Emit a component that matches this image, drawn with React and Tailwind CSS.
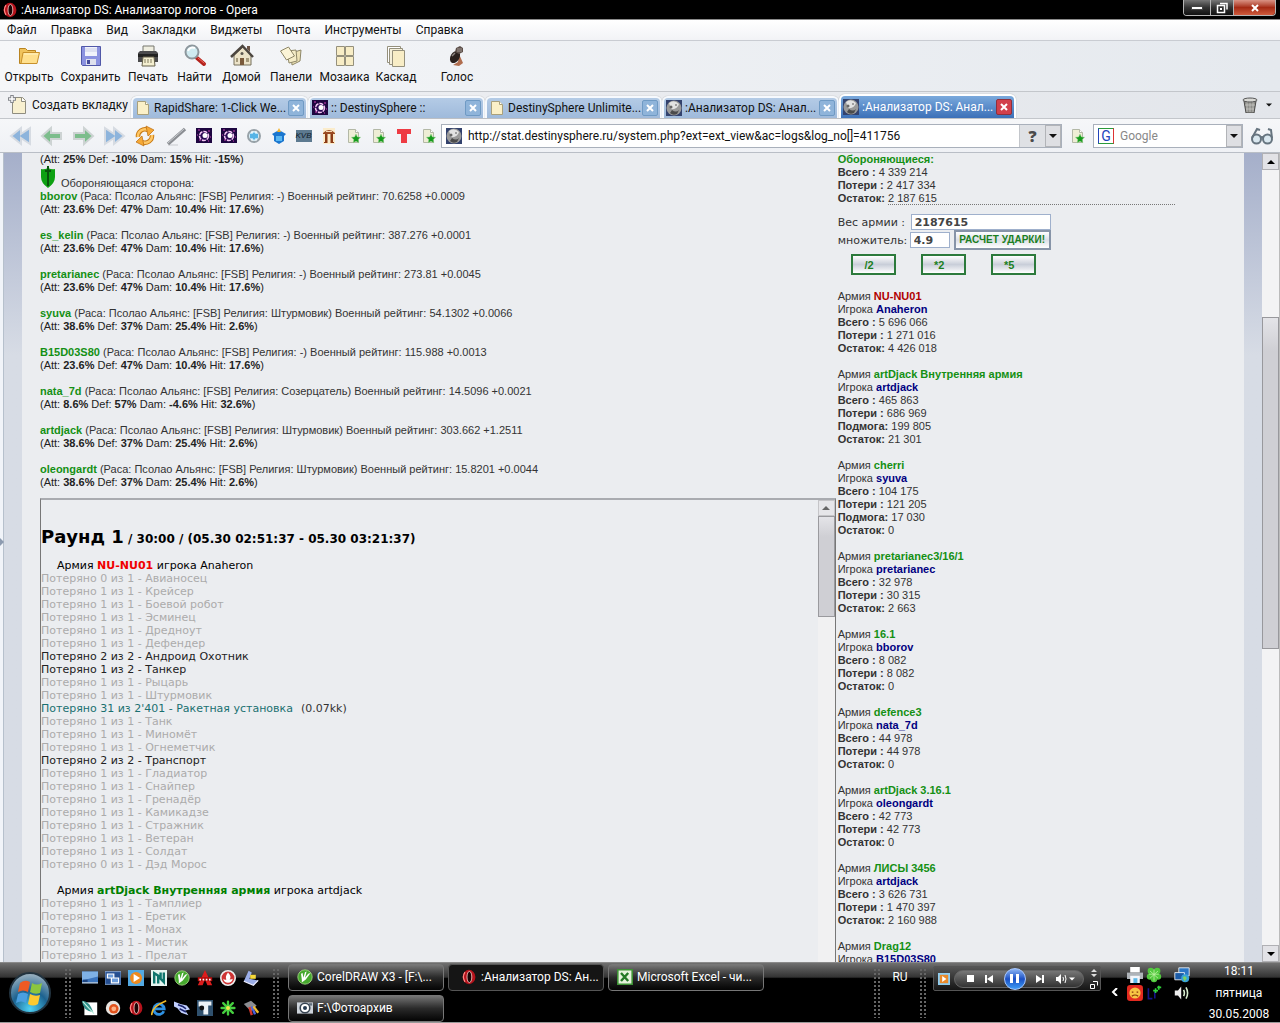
import { useState } from "react";
import clsx from "clsx";

const menu = ["Файл", "Правка", "Вид", "Закладки", "Виджеты", "Почта", "Инструменты", "Справка"];

function Svg({ size = "size-5", box = "0 0 20 20", children }) {
    return (
        <svg viewBox={box} className={clsx("shrink-0", size)} aria-hidden="true">
            {children}
        </svg>
    );
}

/* ---------- Toolbar icons ---------- */

function FolderIcon() {
    return (
        <Svg size="size-6" box="0 0 24 24">
            <path d="M2.500 4.500h6l2 2h8v3h-12l-1 10h-3z" fill="#f0c35c" stroke="#b98421" />
            <path d="M6 8.500h16.500l-2.500 11H4z" fill="#ffe08e" stroke="#c8912c" />
            <path d="M7 10h14" stroke="#fff4c8" />
        </Svg>
    );
}

function DiskIcon() {
    return (
        <Svg size="size-6" box="0 0 24 24">
            <path d="M2.500 2.500h19v19h-18l-1-1z" fill="#8b92e0" stroke="#5158a8" />
            <path d="M6 3h12v9H6z" fill="#f1f3fb" />
            <path d="M6 5h12M6 7h12" stroke="#c9cde8" />
            <path d="M7 15h10v6H7z" fill="#dfe1ee" />
            <path d="M8 16h3v4H8z" fill="#444b99" />
        </Svg>
    );
}

function PrinterIcon() {
    return (
        <Svg size="size-6" box="0 0 24 24">
            <path d="M7 2h11v8H7z" fill="#efeee0" stroke="#77776f" />
            <path d="M2 9l2-2h16l2 2v9H2z" fill="#4b4b4d" />
            <path d="M2 10h20v3H2z" fill="#222" />
            <path d="M7 13h11l1 9H6z" fill="#f4efd0" stroke="#66614b" />
            <path d="M8 16h8M8 18h9" stroke="#827c60" strokeDasharray="2 1" />
        </Svg>
    );
}

function SearchIcon() {
    return (
        <Svg size="size-6" box="0 0 24 24">
            <path d="M14 14l7 6" stroke="#b3211c" strokeWidth="4" strokeLinecap="round" />
            <path d="M15 14l6 5" stroke="#ef6a5d" strokeLinecap="round" />
            <circle cx="9" cy="8" r="6.500" fill="#cfeaf0" stroke="#8d979d" strokeWidth="2" />
            <path d="M5 7a5 5 0 0 1 7-3" stroke="#fff" strokeWidth="2" fill="none" />
        </Svg>
    );
}

function HomeIcon() {
    return (
        <Svg size="size-6" box="0 0 24 24">
            <path d="M4 11v10h17V11l-8-8z" fill="#ece3c9" stroke="#77705c" />
            <path d="M17 2h3v6l-3-3z" fill="#6c5547" />
            <path d="M1 13L12.500 2 23 13" fill="none" stroke="#4c4640" strokeWidth="2.500" />
            <path d="M10 14h4v7h-4z" fill="#7a5a3b" />
            <circle cx="12" cy="9.500" r="1.500" fill="#5c5850" />
            <path d="M6 14h2v4H6zM16 14h3v4h-3z" fill="#a59a7c" />
        </Svg>
    );
}

function PanelsIcon() {
    return (
        <Svg size="size-6" box="0 0 24 24">
            <path d="M12 9l10-3-1 11-8 4z" fill="#eee3b6" stroke="#8e8768" />
            <path d="M8 7l9-1 1 11-8 2z" fill="#f5edc8" stroke="#8e8768" />
            <path d="M1.500 7l8-4 6 9-8 4z" fill="#fbf4d6" stroke="#8e8768" />
        </Svg>
    );
}

function TilesIcon() {
    return (
        <Svg size="size-6" box="0 0 24 24">
            <path d="M3.500 2.500h8v9h-8zM12.500 2.500h8v9h-8zM3.500 12.500h8v9h-8zM12.500 12.500h8v9h-8z" fill="#f8edc6" stroke="#95907c" />
        </Svg>
    );
}

function CascadeIcon() {
    return (
        <Svg size="size-6" box="0 0 24 24">
            <path d="M3.500 2.500h13v16h-13z" fill="#fff" stroke="#95907c" />
            <path d="M5.500 4.500h13v16h-13z" fill="#f5f0db" stroke="#95907c" />
            <path d="M8.500 6.500h12v16h-12z" fill="#f8edc6" stroke="#95907c" />
        </Svg>
    );
}

function VoiceIcon() {
    return (
        <Svg size="size-6" box="0 0 24 24">
            <path d="M14 10l4 9-4 3-6-1 5-3z" fill="#b06d4e" />
            <ellipse cx="10" cy="13" rx="4.500" ry="6.500" fill="#2a211e" transform="rotate(30 10 13)" />
            <path d="M11 4l4-2 3 2v4l-4 2-4-2z" fill="#5c4f49" />
            <path d="M12 5h5M12 7h5" stroke="#a39a95" />
            <path d="M7 12l3-3" stroke="#8e8682" strokeWidth="1.500" />
        </Svg>
    );
}

/* ---------- Small icons ---------- */

function OperaShape() {
    return (
        <>
            <ellipse cx="10" cy="10" rx="8" ry="9" fill="#b5121b" />
            <path d="M5 4q-4 6 0 12" stroke="#ff8a86" strokeWidth="1.500" fill="none" />
            <ellipse cx="10.500" cy="10" rx="3" ry="7" fill="#1a0505" stroke="#fbd0cd" />
        </>
    );
}

function OperaIcon() {
    return (
        <Svg size="size-4">
            <OperaShape />
        </Svg>
    );
}

function PageIcon() {
    return (
        <Svg size="size-4" box="0 0 16 16">
            <path d="M2.500 1.500h8l3 3v10h-11z" fill="#fbf0c8" stroke="#a9a07c" />
            <path d="M10.500 1.500v3h3" fill="#fff" stroke="#a9a07c" />
        </Svg>
    );
}

function NewPageIcon() {
    return (
        <Svg size="size-5">
            <path d="M4.500 2.500h10l3 3v13h-13z" fill="#f8f0d0" stroke="#8f8d80" />
            <path d="M13.500 2.500v4h4" fill="#fff" stroke="#8f8d80" />
            <path d="M4 0v8M0 4h8" stroke="#84878c" strokeWidth="3.500" />
            <path d="M4 1v6M1 4h6" stroke="#fff" strokeWidth="1.500" />
        </Svg>
    );
}

function SphereIcon() {
    return (
        <Svg size="size-4" box="0 0 16 16">
            <path d="M0 0h16v15H0z" fill="#1d0640" />
            <circle cx="8" cy="8" r="4.500" fill="#2b0b55" stroke="#f3c4f3" strokeWidth="1.500" strokeDasharray="4 1" />
            <circle cx="9" cy="7.500" r="2.500" fill="#fff" />
            <path d="M2 2h2M12 3h2M3 12h2M12 13h1M1 7h1M14 9h1" stroke="#d03fb8" />
        </Svg>
    );
}

function MoonIcon() {
    return (
        <Svg size="size-4" box="0 0 16 16">
            <path d="M0 0h16v16H0z" fill="#33426d" />
            <circle cx="8" cy="8" r="7.500" fill="#9a9a9a" />
            <path d="M3 3q5-4 10 1-2 6-8 5z" fill="#e2e2e2" />
            <path d="M6 10q4 3 7 0l-2 4q-4 2-7-1z" fill="#4b4b4b" />
            <circle cx="5" cy="7" r="1.500" fill="#666" />
            <circle cx="10" cy="5" r="1" fill="#888" />
        </Svg>
    );
}

function StarPageIcon() {
    return (
        <Svg size="size-4" box="0 0 16 16">
            <path d="M2.500 1.500h7l3 3v10h-10z" fill="#eeeed5" stroke="#b3b8a6" />
            <path d="M9.500 1.500v3h3" fill="#fff" stroke="#b3b8a6" />
            <path d="M10 6l1.400 2.900 3.200.4-2.400 2.200.6 3.300-2.800-1.600L7.200 14.800l.6-3.300-2.400-2.200 3.200-.4z" fill="#159a1c" stroke="#9ad58e" strokeWidth=".5" />
        </Svg>
    );
}

function ArrowIcon({ color, double, flip }) {
    return (
        <Svg size="size-6" box="0 0 24 24">
            <g transform={flip ? "translate(24 0) scale(-1 1)" : undefined}>
                {double ? (
                    <path d="M2 12l10-8v6l9-6v16l-9-6v6z" fill={color} stroke="#d6dbe2" strokeWidth="2" />
                ) : (
                    <path d="M2 12l9-8v5h10v6H11v5z" fill={color} stroke="#cdd3d3" strokeWidth="2" />
                )}
            </g>
        </Svg>
    );
}

function ReloadIcon() {
    return (
        <Svg size="size-6" box="0 0 24 24">
            <path d="M5 13A7 7 0 0 1 15 6" fill="none" stroke="#c97a12" strokeWidth="4.500" />
            <path d="M5 13A7 7 0 0 1 15 6" fill="none" stroke="#ffc765" strokeWidth="2.500" />
            <path d="M13 2l8 4-6 6z" fill="#f6a936" stroke="#b9690b" strokeWidth=".7" />
            <path d="M19 11A7 7 0 0 1 9 18" fill="none" stroke="#c97a12" strokeWidth="4.500" />
            <path d="M19 11A7 7 0 0 1 9 18" fill="none" stroke="#ffc765" strokeWidth="2.500" />
            <path d="M11 22l-8-4 6-6z" fill="#f6a936" stroke="#b9690b" strokeWidth=".7" />
        </Svg>
    );
}

function WandIcon() {
    return (
        <Svg size="size-6" box="0 0 24 24">
            <path d="M4 21h10" stroke="#dcdee2" strokeWidth="2" />
            <path d="M4 20L21 5" stroke="#8b8e93" strokeWidth="3.500" />
            <path d="M4 19L20 5" stroke="#c9ccd0" />
        </Svg>
    );
}

function GlobeIcon() {
    return (
        <Svg size="size-4" box="0 0 16 16">
            <circle cx="8" cy="8" r="6" fill="#d9f1fb" stroke="#98a2a8" strokeWidth="2" />
            <path d="M4 6q4-3 8 0v4q-4 3-8 0z" fill="#56b4e6" />
            <path d="M6 3v3M10 3v3M6 10v3M10 10v3" stroke="#fff" />
        </Svg>
    );
}

function PotIcon() {
    return (
        <Svg size="size-4" box="0 0 16 16">
            <path d="M1 6l7-4 7 4-2 2v5l-5 3-5-3V8z" fill="#1a76cf" />
            <path d="M5 8h6v5H5z" fill="#59b7f2" />
            <path d="M6 4l2-4 2 4z" fill="#f2b32c" />
        </Svg>
    );
}

function TempleIcon() {
    return (
        <Svg size="size-4" box="0 0 16 16">
            <path d="M2 0h12v16H2z" fill="#fbeccb" />
            <path d="M2 5q6-6 12 0v1H2z" fill="#9a4a22" />
            <path d="M5 3.500h6" stroke="#f6d9b6" />
            <path d="M4 6h2.500v9H3v-1h1zM9.500 6H12v8h1v1H9.500z" fill="#8c3b17" />
        </Svg>
    );
}

function TeeIcon() {
    return (
        <Svg size="size-4" box="0 0 16 16">
            <path d="M1 1h14v5h-4v9H5V6H1z" fill="#ee3b43" />
        </Svg>
    );
}

function TrashIcon() {
    return (
        <Svg size="size-4" box="0 0 16 16">
            <path d="M2 4h12l-2 12H4z" fill="#8d8d89" stroke="#4a4a48" />
            <path d="M5 5v10M8 5v10M11 5v10M3 8h10M4 12h8" stroke="#cfcfca" strokeWidth=".7" />
            <ellipse cx="8" cy="3" rx="7" ry="2" fill="#d8d8d4" stroke="#555" />
        </Svg>
    );
}

function GlassesIcon() {
    return (
        <Svg size="size-6" box="0 0 24 24">
            <g fill="#d9e7ef" stroke="#66747f" strokeWidth="2">
                <circle cx="6.500" cy="15" r="4.500" />
                <circle cx="17.500" cy="15" r="4.500" />
                <path d="M2 14L7 5l3 1M22 14l-1-8-3-1M10.500 14q1.500-2 3 0" fill="none" />
            </g>
        </Svg>
    );
}

function CloseMark() {
    return (
        <Svg size="size-2" box="0 0 8 8">
            <path d="M1 1l6 6M7 1L1 7" stroke="#fff" strokeWidth="2" />
        </Svg>
    );
}

function Triangle({ up, size = "w-2 h-1" }) {
    return (
        <Svg size={size} box="0 0 8 4">
            <path d={up ? "M4 0l4 4H0z" : "M0 0h8L4 4z"} fill="currentColor" />
        </Svg>
    );
}

function ShieldIcon() {
    return (
        <Svg size="w-4 h-6" box="0 0 16 24">
            <path d="M1 3q3 1 7-1 4 2 7 1v8q0 6-7 11-7-5-7-11z" fill="#0da012" />
            <path d="M8 0v20M5 5h6" stroke="#07540b" strokeWidth="2" />
        </Svg>
    );
}

/* ---------- Browser chrome ---------- */

const tools = [
    { name: "Открыть", icon: FolderIcon, width: "w-14" },
    { name: "Сохранить", icon: DiskIcon, width: "w-[67px]" },
    { name: "Печать", icon: PrinterIcon, width: "w-12" },
    { name: "Найти", icon: SearchIcon, width: "w-[45px]" },
    { name: "Домой", icon: HomeIcon, width: "w-[49px]" },
    { name: "Панели", icon: PanelsIcon, width: "w-[50px]" },
    { name: "Мозаика", icon: TilesIcon, width: "w-[57px]" },
    { name: "Каскад", icon: CascadeIcon, width: "w-[46px]" },
    { name: "Голос", icon: VoiceIcon, width: "w-[76px]" },
];

const tabs = [
    { title: "RapidShare: 1-Click We...", icon: PageIcon },
    { title: ":: DestinySphere ::", icon: SphereIcon },
    { title: "DestinySphere Unlimite...", icon: PageIcon },
    { title: ":Анализатор DS: Анал...", icon: MoonIcon },
    { title: ":Анализатор DS: Анал...", icon: MoonIcon },
];

const bookmarks = [SphereIcon, SphereIcon, GlobeIcon, PotIcon, null, TempleIcon, StarPageIcon, StarPageIcon, TeeIcon, StarPageIcon];

function TitleBar() {
    return (
        <header className="flex h-5 shrink-0 items-center gap-[3px] border-b border-[#8a8a8a] bg-black pl-0.5 text-white">
            <OperaIcon />
            <h1 className="flex-1">:Анализатор DS: Анализатор логов - Opera</h1>
            <div className="mr-1 flex h-4 self-start overflow-hidden rounded-b border border-t-0 border-[#b5b5b5]">
                <button aria-label="Свернуть" className="flex w-[26px] items-center justify-center bg-linear-to-b from-[#777] via-[#333] to-[#111]">
                    <span className="h-1 w-3 border border-[#444] bg-white" />
                </button>
                <button aria-label="Развернуть" className="flex w-6 items-center justify-center border-x border-[#b5b5b5] bg-linear-to-b from-[#777] via-[#333] to-[#111]">
                    <Svg size="size-3" box="0 0 12 12">
                        <path d="M4 1.500h7v6M1.500 3.500h7v7h-7z" fill="none" stroke="#fff" strokeWidth="1.500" />
                        <path d="M4 6h2v2H4z" fill="#fff" />
                    </Svg>
                </button>
                <button aria-label="Закрыть" className="flex w-[41px] items-center justify-center bg-linear-to-b from-[#d99284] via-[#a52a14] to-[#cf5a3c]">
                    <CloseMark />
                </button>
            </div>
        </header>
    );
}

function TabBar() {
    const [active, setActive] = useState(4);

    return (
        <div className="flex h-[27px] shrink-0 items-end border-b border-[#c3c6cb] bg-linear-to-r from-[#f0f1f4] to-[#e3e6eb] pr-2">
            <button className="flex w-[131px] shrink-0 items-center gap-1 self-center pl-2">
                <NewPageIcon />
                <span>Создать вкладку</span>
            </button>
            <div className="flex min-w-0 flex-1 items-end">
                {tabs.map((tab, i) => {
                    const Icon = tab.icon;
                    return (
                        <div
                            key={i}
                            className={clsx(
                                "flex w-[177px] items-center gap-[3px] rounded-t-md border-2 border-b-0 pr-0.5 pl-0.5 shadow-[0_0_1px_#888]",
                                i === active
                                    ? "h-6 border-white bg-linear-to-b from-[#7aa9dc] to-[#3c70b8] text-white"
                                    : "h-[22px] border-[#f6f9fd] bg-linear-to-b from-[#b4cbe6] to-[#9fbadb]"
                            )}
                        >
                            <Icon />
                            <button className="min-w-0 flex-1 text-left whitespace-nowrap" onClick={() => setActive(i)}>
                                {tab.title}
                            </button>
                            <button
                                aria-label="Закрыть вкладку"
                                className={clsx(
                                    "flex size-4 shrink-0 items-center justify-center rounded-xs border",
                                    i === active ? "border-[#8f2f3c] bg-[#d2404b]" : "border-[#6f9ac4] bg-[#8fb4da]"
                                )}
                            >
                                <CloseMark />
                            </button>
                        </div>
                    );
                })}
            </div>
            <button aria-label="Корзина" className="flex items-center gap-2 self-center">
                <TrashIcon />
                <Triangle size="w-1.5 h-1" />
            </button>
        </div>
    );
}

function AddressBar() {
    return (
        <div className="flex h-[34px] shrink-0 items-center border-b border-[#b9bec6] bg-linear-to-b from-[#f6f7f9] to-[#eff1f5] pl-[5px]">
            {[
                ["Перемотка назад", <ArrowIcon color="#8db4dc" double />],
                ["Назад", <ArrowIcon color="#7cbd8c" />],
                ["Вперёд", <ArrowIcon color="#7cbd8c" flip />],
                ["Перемотка вперёд", <ArrowIcon color="#8db4dc" double flip />],
                ["Обновить", <ReloadIcon />],
                ["Автозаполнение", <WandIcon />],
            ].map(([label, icon]) => (
                <button key={label} aria-label={label} className="flex w-[31px] shrink-0 justify-center">
                    {icon}
                </button>
            ))}
            {bookmarks.map((Icon, i) => (
                <button key={i} aria-label="Закладка" className="flex w-[25px] shrink-0 justify-center">
                    {Icon ? (
                        <Icon />
                    ) : (
                        <span className="h-3 w-4 bg-[#5d7a90] text-center font-['Liberation_Sans'] text-[8px] leading-3 text-[#101c2c] italic">
                            KVB
                        </span>
                    )}
                </button>
            ))}
            <div className="flex h-6 min-w-0 flex-1 items-center border border-[#a9b0bb] bg-white pl-1">
                <MoonIcon />
                <input
                    aria-label="Адрес"
                    className="min-w-0 flex-1 px-1.5 outline-none"
                    defaultValue="http://stat.destinysphere.ru/system.php?ext=ext_view&ac=logs&log_no[]=411756"
                />
                <button className="h-full w-[26px] border-l border-[#c3c6cb] bg-[#dfe1e5] font-['Open_Sans',sans-serif] text-[16px] leading-5 font-extrabold text-[#4b4b4b]">?</button>
                <button aria-label="История" className="flex h-full w-4 items-center justify-center border border-[#b2b4b8] bg-[#dedfe3]">
                    <Triangle />
                </button>
            </div>
            <button aria-label="Добавить" className="flex w-[31px] shrink-0 justify-center">
                <StarPageIcon />
            </button>
            <div className="flex h-6 w-[150px] items-center border border-[#a9b0bb] bg-white pl-1">
                <span className="flex size-4 shrink-0 items-center justify-center border border-t-[#2a9a3a] border-r-[#d33] border-b-[#2a9a3a] border-l-[#24b] text-[14px] leading-4 text-[#2244bb]">
                    G
                </span>
                <input aria-label="Поиск" placeholder="Google" className="min-w-0 flex-1 px-1.5 outline-none placeholder:text-[#888]" />
                <button aria-label="Поисковая система" className="flex h-full w-4 items-center justify-center border border-[#b2b4b8] bg-[#dedfe3]">
                    <Triangle />
                </button>
            </div>
            <button aria-label="Вид страницы" className="flex w-[37px] shrink-0 justify-center">
                <GlassesIcon />
            </button>
        </div>
    );
}

/* ---------- Page ---------- */

const defenders = [
    ["bborov", "-", "70.6258 +0.0009", ["23.6%", "47%", "10.4%", "17.6%"]],
    ["es_kelin", "-", "387.276 +0.0001", ["23.6%", "47%", "10.4%", "17.6%"]],
    ["pretarianec", "-", "273.81 +0.0045", ["23.6%", "47%", "10.4%", "17.6%"]],
    ["syuva", "Штурмовик", "54.1302 +0.0066", ["38.6%", "37%", "25.4%", "2.6%"]],
    ["B15D03S80", "-", "115.988 +0.0013", ["23.6%", "47%", "10.4%", "17.6%"]],
    ["nata_7d", "Созерцатель", "14.5096 +0.0021", ["8.6%", "57%", "-4.6%", "32.6%"]],
    ["artdjack", "Штурмовик", "303.662 +1.2511", ["38.6%", "37%", "25.4%", "2.6%"]],
    ["oleongardt", "Штурмовик", "15.8201 +0.0044", ["38.6%", "37%", "25.4%", "2.6%"]],
];

const losses = [
    ["0 из 1", "Авианосец"],
    ["1 из 1", "Крейсер"],
    ["1 из 1", "Боевой робот"],
    ["1 из 1", "Эсминец"],
    ["1 из 1", "Дредноут"],
    ["1 из 1", "Дефендер"],
    ["2 из 2", "Андроид Охотник", "text-[#222]"],
    ["1 из 2", "Танкер", "text-[#222]"],
    ["1 из 1", "Рыцарь"],
    ["1 из 1", "Штурмовик"],
    ["31 из 2'401", "Ракетная установка", "text-[#1a7070]", "(0.07kk)"],
    ["1 из 1", "Танк"],
    ["1 из 1", "Миномёт"],
    ["1 из 1", "Огнеметчик"],
    ["2 из 2", "Транспорт", "text-[#222]"],
    ["1 из 1", "Гладиатор"],
    ["1 из 1", "Снайпер"],
    ["1 из 1", "Гренадёр"],
    ["1 из 1", "Камикадзе"],
    ["1 из 1", "Стражник"],
    ["1 из 1", "Ветеран"],
    ["1 из 1", "Солдат"],
    ["0 из 1", "Дэд Морос"],
];

const losses2 = [
    ["1 из 1", "Тамплиер"],
    ["1 из 1", "Еретик"],
    ["1 из 1", "Монах"],
    ["1 из 1", "Мистик"],
    ["1 из 1", "Прелат"],
];

const armies = [
    ["NU-NU01", "Anaheron", [["Всего :", "5 696 066"], ["Потери :", "1 271 016"], ["Остаток:", "4 426 018"]]],
    ["artDjack Внутренняя армия", "artdjack", [["Всего :", "465 863"], ["Потери :", "686 969"], ["Подмога:", "199 805"], ["Остаток:", "21 301"]]],
    ["cherri", "syuva", [["Всего :", "104 175"], ["Потери :", "121 205"], ["Подмога:", "17 030"], ["Остаток:", "0"]]],
    ["pretarianec3/16/1", "pretarianec", [["Всего :", "32 978"], ["Потери :", "30 315"], ["Остаток:", "2 663"]]],
    ["16.1", "bborov", [["Всего :", "8 082"], ["Потери :", "8 082"], ["Остаток:", "0"]]],
    ["defence3", "nata_7d", [["Всего :", "44 978"], ["Потери :", "44 978"], ["Остаток:", "0"]]],
    ["artDjack 3.16.1", "oleongardt", [["Всего :", "42 773"], ["Потери :", "42 773"], ["Остаток:", "0"]]],
    ["ЛИСЫ 3456", "artdjack", [["Всего :", "3 626 731"], ["Потери :", "1 470 397"], ["Остаток:", "2 160 988"]]],
    ["Drag12", "B15D03S80", []],
];

function Bonus({ values }) {
    const [att, def, dam, hit] = values;
    return (
        <p className="text-[#222]">
            (Att: <b>{att}</b> Def: <b>{def}</b> Dam: <b>{dam}</b> Hit: <b>{hit}</b>)
        </p>
    );
}

function LossList({ army, color, player, items }) {
    return (
        <section className="mb-[13px]">
            <p className="pl-4 text-black">
                Армия <b className={color}>{army}</b> игрока {player}
            </p>
            <ul>
                {items.map(([count, unit, tone, note]) => (
                    <li key={unit} className={tone || "text-[#ababab]"}>
                        Потеряно {count} - {unit}
                        {note && <span className="ml-2 text-[#333]">{note}</span>}
                    </li>
                ))}
            </ul>
        </section>
    );
}

function BattleLog() {
    return (
        <div className="mt-[9px] mr-px flex min-h-0 flex-1 border-t-2 border-r border-l border-t-[#a9abb0] border-r-[#777] border-l-[#777] font-['DejaVu_Sans',sans-serif]">
            <div className="min-w-0 flex-1 overflow-hidden pt-[25px]">
                <h2 className="mb-2 text-[12px] leading-6 font-bold text-black">
                    <span className="text-[18px]">Раунд 1</span> / 30:00 / (05.30 02:51:37 - 05.30 03:21:37)
                </h2>
                <LossList army="NU-NU01" color="text-[#f00000]" player="Anaheron" items={losses} />
                <LossList army="artDjack Внутренняя армия" color="text-[#008000]" player="artdjack" items={losses2} />
            </div>
            <div className="flex w-[17px] flex-col bg-[#f1f1f2]">
                <button aria-label="Вверх" className="flex h-4 items-center justify-center border border-[#c5c5c8] bg-[#e6e6e9] text-[#666]">
                    <Triangle up />
                </button>
                <div className="h-[101px] border border-[#9a9a9e] bg-linear-to-b from-[#e4e4e8] via-[#cfcfd4] via-20% to-[#cfcfd4]" />
            </div>
        </div>
    );
}

function Calculator() {
    const [weight, setWeight] = useState("2187615");
    const [factor, setFactor] = useState("4.9");
    const scale = (k) => setWeight(String(Math.round(Number(weight) * k)));
    const field = "border border-[#9fb0cc] bg-white px-[3px] font-bold text-[#444]";
    const small = "h-[21px] w-[45px] border-2 border-[#2c7a3c] bg-linear-to-b from-white via-[#c9ced9] to-white pr-2 text-[11px] leading-4 font-bold text-[#1b7f1f]";

    return (
        <form className="mt-[9px] mb-[15px] font-['DejaVu_Sans',sans-serif]" onSubmit={(e) => e.preventDefault()}>
            <div className="flex h-4 items-center">
                <label htmlFor="weight" className="w-[73px] whitespace-nowrap">Вес армии :</label>
                <input id="weight" className={clsx("h-4 w-[140px]", field)} value={weight} onChange={(e) => setWeight(e.target.value)} />
            </div>
            <div className="flex h-5 items-center">
                <label htmlFor="factor" className="w-[72px] whitespace-nowrap">множитель:</label>
                <input id="factor" className={clsx("h-4 w-10", field)} value={factor} onChange={(e) => setFactor(e.target.value)} />
                <button className="ml-1 h-5 w-[97px] border-2 border-[#8794a8] bg-linear-to-b from-white via-[#dcdfe6] to-white font-['Liberation_Sans',sans-serif] text-[10px] leading-4 font-bold whitespace-nowrap text-[#1b7f1f]">
                    РАСЧЕТ УДАРКИ!
                </button>
            </div>
            <div className="mt-1 flex gap-[25px] pl-[13px] font-['Liberation_Sans',sans-serif]">
                <button type="button" className={small} onClick={() => scale(0.5)}>/2</button>
                <button type="button" className={small} onClick={() => scale(2)}>*2</button>
                <button type="button" className={small} onClick={() => scale(5)}>*5</button>
            </div>
        </form>
    );
}

function Summary() {
    return (
        <aside className="min-w-0 flex-1 overflow-hidden pl-px">
            <p className="font-bold text-[#149014]">Обороняющиеся:</p>
            <p><b>Всего :</b> 4 339 214</p>
            <p><b>Потери :</b> 2 417 334</p>
            <p className="mr-[69px] flex gap-[3px]">
                <b>Остаток:</b>
                <span className="flex-1 border-b border-dotted border-[#777] leading-3">2 187 615</span>
            </p>
            <Calculator />
            {armies.map(([army, player, rows], i) => (
                <section key={army} className="mb-[13px]">
                    <p>Армия <b className={i === 0 ? "text-[#b00000]" : "text-[#149014]"}>{army}</b></p>
                    <p>Игрока <b className="text-[#000080]">{player}</b></p>
                    {rows.map(([label, value]) => (
                        <p key={label}><b>{label}</b> {value}</p>
                    ))}
                </section>
            ))}
        </aside>
    );
}

function PageScroll() {
    const arrow = "flex h-[17px] items-center justify-center border border-[#b0b0b4] bg-[#e2e2e6] text-black";
    return (
        <div className="flex w-[18px] shrink-0 flex-col border-r border-[#bbb] bg-[#f3f3f4]">
            <button aria-label="Вверх" className={arrow}><Triangle up /></button>
            <div className="flex-[148]" />
            <div className="flex-[331] border border-[#98989c] bg-linear-to-b from-[#e4e4e8] via-[#cfcfd4] via-10% to-[#cfcfd4]" />
            <div className="flex-[297]" />
            <button aria-label="Вниз" className={arrow}><Triangle /></button>
        </div>
    );
}

function SideStrip() {
    return <div className="w-[18px] shrink-0 bg-linear-to-b from-[#a5afca] via-[#d7dce5] via-25% to-[#d7dce5]" />;
}

/* ---------- Taskbar ---------- */

function Grip() {
    return <div className="h-[50px] w-2 shrink-0 bg-[radial-gradient(#666_1px,transparent_1px)] bg-[length:4px_4px]" />;
}

function CorelShape() {
    return (
        <>
            <circle cx="10" cy="10" r="9" fill="#46a92e" stroke="#a8dd89" />
            <path d="M6 17l5-4 6-8-3 1-4 5 2-8-2 1-2 7-1-6-2 1 1 7z" fill="#fff" />
        </>
    );
}

function CorelIcon() {
    return (
        <Svg size="size-4">
            <CorelShape />
        </Svg>
    );
}

function CameraIcon() {
    return (
        <Svg size="size-4">
            <path d="M0 3h20v14H0z" fill="#cdd3da" />
            <circle cx="10" cy="10" r="6" fill="#fff" stroke="#394552" strokeWidth="2" />
            <circle cx="10" cy="10" r="2.500" fill="#263a50" />
            <path d="M15 4h4v3h-4z" fill="#63707c" />
        </Svg>
    );
}

function ExcelIcon() {
    return (
        <Svg size="size-4">
            <path d="M1 1h18v18H1z" fill="#e5f3dc" stroke="#3d9135" strokeWidth="2" />
            <path d="M5 5l9 10M14 5L5 15" stroke="#247a26" strokeWidth="3" />
        </Svg>
    );
}

const quickLaunch = [
    ["Рабочий стол", <><path d="M0 2h20v14H0z" fill="#3d75bd" /><path d="M0 2h20v6L0 13z" fill="#7fb1e5" /><path d="M0 15h20v2H0z" fill="#9fb8d4" /><path d="M1 12h6v3H1z" fill="#1d4480" /></>],
    ["Окна", <><path d="M0 2h20v16H0z" fill="#254f91" stroke="#8fb0dd" /><path d="M3 5h8v5H3zM8 10h9v6H8z" fill="#6c9ddb" stroke="#fff" strokeWidth="1.500" /></>],
    ["Проигрыватель", <><path d="M0 0h20v20H0z" fill="#53a9e2" /><circle cx="10" cy="10" r="7.500" fill="#ef8a1d" /><path d="M7 5l8 5-8 5z" fill="#fff" /></>],
    ["Навигатор", <><path d="M0 0h20v20H0z" fill="#e6f5f0" /><path d="M4 17V4l5 3v10M12 3v8l4 4V3" stroke="#10766d" strokeWidth="3" fill="none" /></>],
    ["CorelDRAW", <CorelShape />],
    ["Распознавание", <><path d="M10 0l9 19h-6l-3-7-3 7H1z" fill="#dd1c1c" /><path d="M1 9h18v5H1z" fill="#b40c0c" /><path d="M3 12h14" stroke="#fff" strokeWidth="2" strokeDasharray="2 2" /></>],
    ["Запись", <><circle cx="10" cy="10" r="9" fill="#cf3434" stroke="#eee" strokeWidth="2" /><path d="M10 3q5 5 2 9 3 0 4-1-1 5-6 5t-6-5q2 2 4 1-2-4 2-9" fill="#fff" /></>],
    ["Сканер", <><path d="M7 1l4 2-3 8 11 2-6 6-12-5z" fill="#9caee8" /><path d="M9 6h7v5H9z" fill="#f7d938" /><path d="M1 14l12 5 6-6" stroke="#eef" strokeWidth="1.500" fill="none" /></>],
    ["Перо", <><path d="M3 3h16v16H3z" fill="#fff" /><path d="M0 1q9 0 14 14Q1 14 0 1" fill="#2c8f88" /><path d="M1 2l14 15" stroke="#bff0e0" strokeWidth="1.500" /></>],
    ["Nero", <><circle cx="10" cy="10" r="9" fill="#e7e3df" /><circle cx="11" cy="11" r="6" fill="#e2521c" /><circle cx="11" cy="11" r="3" fill="#ffb084" /></>],
    ["Opera", <OperaShape />],
    ["Internet Explorer", <><path d="M16 14a6.500 6.500 0 1 1 .5-3H5" fill="none" stroke="#2f92e3" strokeWidth="3.500" /><path d="M1 19Q0 9 19 1" stroke="#f0bb2a" strokeWidth="2" fill="none" /></>],
    ["The Bat", <><path d="M0 2l8 3 8 2 4 5-6 1 4 6-9-3-5-6-4-2z" fill="#c2d0ff" /><path d="M5 6l6 2 4 3M7 11l8 4" stroke="#1e2670" strokeWidth="2" /></>],
    ["Total", <><path d="M0 0h20v20H0z" fill="#2f506d" /><path d="M2 2h16v5h-4v11H8V8H2z" fill="#eef3f7" /><circle cx="6" cy="10" r="3" fill="#111" /></>],
    ["ICQ", <><g stroke="#46cf3f" strokeWidth="3" strokeLinecap="round"><path d="M10 2v16M2 10h16M4 4l12 12M16 4L4 16" /></g><circle cx="10" cy="10" r="2.500" fill="#f0e54c" /></>],
    ["Запуск", <><path d="M1 5l9-4 7 6-7 7z" fill="#8b8d92" /><path d="M8 9l3 10" stroke="#d5372c" strokeWidth="3" /><path d="M11 8l4 10" stroke="#4a64e0" strokeWidth="3" /><path d="M13 8l6 8" stroke="#f0bc30" strokeWidth="3" /></>],
];

const tasks = [
    { title: "CorelDRAW X3 - [F:\\...", icon: CorelIcon },
    { title: ":Анализатор DS: Ан...", icon: OperaIcon, active: true },
    { title: "Microsoft Excel - чи...", icon: ExcelIcon },
    { title: "F:\\Фотоархив", icon: CameraIcon },
];

function StartButton() {
    return (
        <button aria-label="Пуск" className="flex w-[60px] shrink-0 justify-center">
            <svg viewBox="0 0 44 44" className="size-11" aria-hidden="true">
                <defs>
                    <radialGradient id="orb" cx=".5" cy=".9" r=".9">
                        <stop offset="0" stopColor="#4ed2f5" />
                        <stop offset=".5" stopColor="#1c6290" />
                        <stop offset="1" stopColor="#a2b5c2" />
                    </radialGradient>
                </defs>
                <circle cx="22" cy="22" r="20" fill="url(#orb)" stroke="#22333f" strokeWidth="2" />
                <path d="M12 12q5-4 10-1l-2 10q-5-3-10 0z" fill="#ee5a24" />
                <path d="M24 12q5 3 10 0l-2 10q-5 2-10-1z" fill="#8cc63e" />
                <path d="M10 23q5-3 10 0l-2 9q-5-3-10 0z" fill="#4a9fe0" />
                <path d="M22 23q5 3 10 1l-2 9q-5 3-10 0z" fill="#fdc92f" />
            </svg>
        </button>
    );
}

function MediaBar() {
    return (
        <div className="flex h-[25px] w-[168px] items-center gap-1 rounded-xs border border-[#555] bg-linear-to-b from-[#555] to-[#161616] pl-1">
            <Svg size="size-3">
                <path d="M0 0h20v20H0z" fill="#8fcdf0" />
                <path d="M3 3h14v14H3z" fill="#e98a2b" />
                <path d="M7 5l7 5-7 5z" fill="#fff" />
            </Svg>
            <div className="flex h-[18px] flex-1 items-center justify-between rounded-full border border-[#666] bg-linear-to-b from-[#777] to-[#333] px-2">
                <button aria-label="Стоп" className="ml-1 size-[7px] bg-white" />
                <button aria-label="Назад">
                    <Svg size="w-3 h-2" box="0 0 12 8"><path d="M2 0h2v8H2zM10 0v8L4 4z" fill="#fff" /></Svg>
                </button>
                <button aria-label="Пауза" className="flex size-[22px] shrink-0 items-center justify-center gap-[3px] rounded-full border border-[#a9c8ff] bg-linear-to-b from-[#8db5f5] via-[#1d50c4] to-[#3f9bf5]">
                    <span className="h-[9px] w-[3px] bg-white" />
                    <span className="h-[9px] w-[3px] bg-white" />
                </button>
                <button aria-label="Вперёд">
                    <Svg size="w-3 h-2" box="0 0 12 8"><path d="M8 0h2v8H8zM2 0v8l6-4z" fill="#fff" /></Svg>
                </button>
                <button aria-label="Громкость" className="flex items-center gap-0.5">
                    <Svg size="size-3" box="0 0 12 12">
                        <path d="M1 4h2l3-3v10L3 8H1z" fill="#fff" />
                        <path d="M8 4q1 2 0 4M10 2q2 4 0 8" stroke="#fff" fill="none" />
                    </Svg>
                    <Triangle size="w-1.5 h-1" />
                </button>
            </div>
            <div className="flex w-3 flex-col items-center gap-1">
                <Svg size="size-2" box="0 0 8 8"><path d="M1 3l3-3 3 3zM1 5l3 3 3-3z" fill="#ddd" /></Svg>
                <Svg size="size-2" box="0 0 8 8"><path d="M3 .5h4.500v4M.5 3.500h4v4h-4z" fill="none" stroke="#fff" /></Svg>
            </div>
        </div>
    );
}

function Tray() {
    return (
        <div className="flex items-center gap-2 self-start pt-1">
            <button aria-label="Показать значки" className="mt-4">
                <Svg size="size-2" box="0 0 8 8"><path d="M6 0L2 4l4 4" stroke="#fff" strokeWidth="2" fill="none" /></Svg>
            </button>
            <div className="grid grid-cols-2 gap-x-[3px] gap-y-0.5">
                <Svg size="size-4"><path d="M4 0h12v7H4z" fill="#fff" /><path d="M0 7h20v8H0z" fill="#aeb3b8" /><path d="M4 11h12v9H4z" fill="#f3f6fa" /><path d="M8 14h5v6H8z" fill="#5db9e8" /></Svg>
                <Svg size="size-4">
                    <g fill="#52c93e">
                        <circle cx="6" cy="5" r="4" /><circle cx="14" cy="5" r="4" /><circle cx="5" cy="12" r="4" /><circle cx="15" cy="12" r="4" /><circle cx="10" cy="15" r="4" /><circle cx="10" cy="9" r="4" />
                    </g>
                    <path d="M10 3v14M4 9h12M5 14l10-9M5 5l10 9" stroke="#c0f2a4" />
                </Svg>
                <Svg size="size-4"><rect width="20" height="20" rx="4" fill="#e32a20" /><circle cx="10" cy="10" r="7" fill="#f7c544" /><path d="M6 9h2M12 9h2M6 14q4-3 8 0" stroke="#8a3208" strokeWidth="1.500" fill="none" /></Svg>
                <Svg size="size-4"><path d="M3 4v13h5M11 8v9" stroke="#15158a" strokeWidth="2" fill="none" /><path d="M9 7h6M12 4v6M14 3h5M16 1v5" stroke="#2fd23a" strokeWidth="2" /></Svg>
            </div>
            <div className="ml-1 grid gap-0.5">
                <Svg size="size-4"><path d="M6 1h13v10H6z" fill="#2c77c6" stroke="#fff" /><path d="M1 7h12v9H1z" fill="#1c5ca8" stroke="#fff" /><circle cx="14" cy="14" r="5" fill="#37a3d9" /><path d="M11 13q3-3 5 1l-3 4z" fill="#7cd062" /></Svg>
                <Svg size="size-4"><path d="M1 7h4l4-5v16l-4-5H1z" fill="#eee" /><path d="M12 6q2 4 0 8M15 3q4 7 0 14" stroke="#d9efd0" strokeWidth="2" fill="none" /></Svg>
            </div>
        </div>
    );
}

function Taskbar() {
    return (
        <footer className="flex h-[61px] shrink-0 items-center border-t border-b border-t-[#8a8a8a] border-b-[#999] bg-linear-to-b from-[#707070] via-[#333] via-24% to-black to-27% text-white">
            <StartButton />
            <div className="w-1" />
            <Grip />
            <nav className="grid shrink-0 grid-cols-8 gap-y-[14px] pr-2.5 pl-[6px]">
                {quickLaunch.map(([label, icon]) => (
                    <button key={label} aria-label={label} className="flex w-[23px] justify-center">
                        <Svg size="size-4">{icon}</Svg>
                    </button>
                ))}
            </nav>
            <Grip />
            <div className="ml-2 grid shrink-0 grid-cols-3 gap-1">
                {tasks.map(({ title, icon: Icon, active }) => (
                    <button
                        key={title}
                        className={clsx(
                            "flex h-[27px] w-[156px] items-center gap-1 rounded border px-2 whitespace-nowrap",
                            active ? "border-[#555] bg-[#151515] pl-3" : "border-[#777] bg-linear-to-b from-[#777] via-[#2a2a2a] via-50% to-[#050505]"
                        )}
                    >
                        <Icon />
                        {title}
                    </button>
                ))}
            </div>
            <div className="flex-1" />
            <Grip />
            <span className="w-[38px] self-start pt-[6px] text-center">RU</span>
            <Grip />
            <div className="w-1.5" />
            <div className="self-start pt-[3px]">
                <MediaBar />
            </div>
            <div className="w-2.5" />
            <Tray />
            <div className="flex h-full w-[90px] flex-col items-center justify-between pl-2 leading-4">
                <time>18:11</time>
                <span>пятница</span>
                <time>30.05.2008</time>
            </div>
        </footer>
    );
}

export default function App() {
    return (
        <div className="flex h-screen flex-col overflow-hidden bg-[#eef0f4] font-['Roboto','Open_Sans',sans-serif] text-[12px] leading-4 text-[#111]">
            <TitleBar />

            {/* Menu */}
            <nav className="flex h-[21px] shrink-0 items-center gap-[14px] border-b border-[#c9ccd2] bg-linear-to-b from-white to-[#f2f3f6] pl-[7px]">
                {menu.map((name) => (
                    <button key={name}>{name}</button>
                ))}
            </nav>

            {/* Main toolbar */}
            <div className="flex h-[51px] shrink-0 border-b border-[#c3c6cb] bg-linear-to-r from-[#f6f7f9] to-[#e5e9ee] pt-[3px] pl-px">
                {tools.map(({ name, icon: Icon, width }) => (
                    <button key={name} className={clsx("flex shrink-0 flex-col items-center gap-px whitespace-nowrap", width)}>
                        <Icon />
                        {name}
                    </button>
                ))}
            </div>

            <TabBar />
            <AddressBar />

            {/* Page viewport */}
            <div className="flex min-h-0 flex-1">
                <button aria-label="Панель" className="flex w-1 shrink-0 items-center border-r border-[#b6c0cc] bg-[#f1f4f9] pb-8">
                    <Svg size="w-1 h-2" box="0 0 4 8"><path d="M0 0l4 4-4 4z" fill="#8d9bb0" /></Svg>
                </button>
                <SideStrip />
                <main className="flex min-w-0 flex-1 bg-[#ebedf0] font-['Liberation_Sans',sans-serif] text-[11px] leading-[13px] text-[#333]">
                    <div className="flex w-2/3 flex-col pl-[18px]">
                        <Bonus values={["25%", "-10%", "15%", "-15%"]} />
                        <div className="flex h-6 items-end gap-[5px]">
                            <ShieldIcon />
                            <span>Обороняющаяся сторона:</span>
                        </div>
                        {defenders.map(([name, faith, rating, values], i) => (
                            <div key={name} className={i > 0 ? "mt-[13px]" : ""}>
                                <p>
                                    <b className="text-[#149014]">{name}</b> (Раса: Псолао Альянс: [FSB] Религия: {faith}) Военный рейтинг: {rating}
                                </p>
                                <Bonus values={values} />
                            </div>
                        ))}
                        <BattleLog />
                    </div>
                    <Summary />
                </main>
                <SideStrip />
                <PageScroll />
            </div>

            <Taskbar />
        </div>
    );
}
